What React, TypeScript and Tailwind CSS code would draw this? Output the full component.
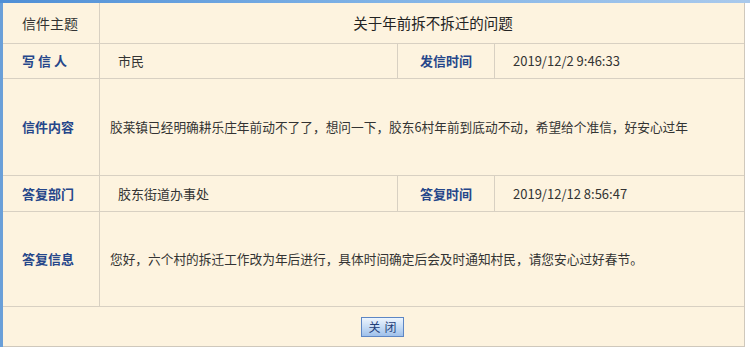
const font = { fontFamily: '"Noto Sans CJK SC", "Noto Sans", sans-serif' };

const Label = ({ text }: { text: string }) => (
  <div className="flex items-center pl-[19px] border-r border-b border-[#d8d0c2] text-[13px] font-bold text-[#25468a]">
    {text}
  </div>
);

const Value = ({ text, wide = false }: { text: string; wide?: boolean }) => (
  <div
    className={`flex items-center border-b border-[#d8d0c2] text-[#333] ${
      wide ? "col-span-3 pl-[10px] text-[12.7px]" : "border-r pl-[18px] text-[13px]"
    }`}
  >
    {text}
  </div>
);

export default function App() {
  return (
    <div className="w-[750px] h-[352px] bg-white overflow-hidden" style={font}>
      <div className="h-[3px] bg-gradient-to-r from-[#4f8fd6] via-[#7fb2e6] to-[#a9c9ec]" />
      <div className="flex">
        <div className="w-[3px] h-[344px] bg-[#6a9fd8]" />
        <div className="w-[742px] h-[344px] bg-[#fdf3df] border-r border-b border-[#cfc8bc]">
          <div className="grid grid-cols-[97px_298px_97px_1fr] grid-rows-[41px_35px_97px_36px_95px]">
            <div className="flex items-center pl-[19px] border-r border-b border-[#d8d0c2] text-[14px] text-[#333]">
              信件主题
            </div>
            <div className="col-span-3 flex items-center justify-center pl-[22px] border-b border-[#d8d0c2] text-[14.5px] text-[#222]">
              关于年前拆不拆迁的问题
            </div>

            <Label text="写 信 人" />
            <Value text="市民" />
            <div className="flex items-center justify-center border-r border-b border-[#d8d0c2] text-[13px] font-bold text-[#25468a]">
              发信时间
            </div>
            <div className="flex items-center pl-[18px] border-b border-[#d8d0c2] text-[13px] text-[#333]">
              2019/12/2 9:46:33
            </div>

            <Label text="信件内容" />
            <Value
              wide
              text="胶莱镇已经明确耕乐庄年前动不了了，想问一下，胶东6村年前到底动不动，希望给个准信，好安心过年"
            />

            <Label text="答复部门" />
            <Value text="胶东街道办事处" />
            <div className="flex items-center justify-center border-r border-b border-[#d8d0c2] text-[13px] font-bold text-[#25468a]">
              答复时间
            </div>
            <div className="flex items-center pl-[18px] border-b border-[#d8d0c2] text-[13px] text-[#333]">
              2019/12/12 8:56:47
            </div>

            <Label text="答复信息" />
            <Value
              wide
              text="您好，六个村的拆迁工作改为年后进行，具体时间确定后会及时通知村民，请您安心过好春节。"
            />
          </div>
          <div className="h-[39px] flex items-center justify-center pl-[18px]">
            <button className="h-[20px] w-[43px] border border-[#5d86c4] bg-gradient-to-b from-[#eef5fd] via-[#c6dcf5] to-[#9fc0ea] text-[12px] leading-none text-[#1f3e78] tracking-[4px] indent-[4px]">
              关闭
            </button>
          </div>
        </div>
      </div>
    </div>
  );
}
